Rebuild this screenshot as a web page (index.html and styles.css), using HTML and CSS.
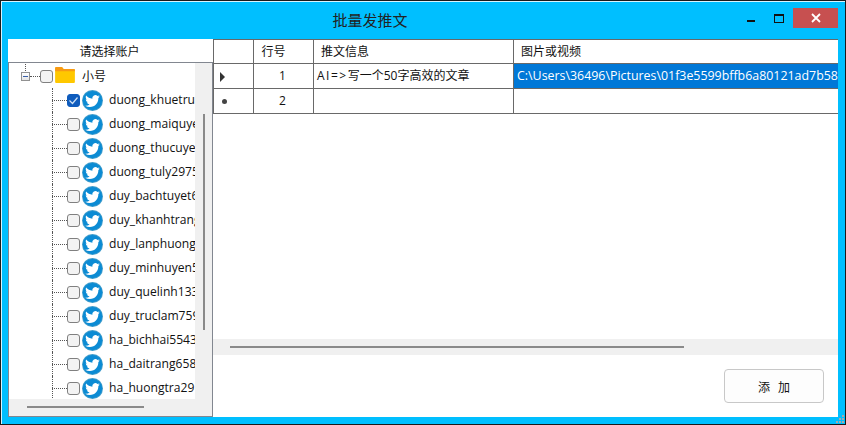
FILE: index.html
```html
<!DOCTYPE html>
<html lang="zh">
<head>
<meta charset="utf-8">
<title>批量发推文</title>
<link rel="stylesheet" href="styles.css">
</head>
<body>
<svg class="defs" width="0" height="0" aria-hidden="true">
  <symbol id="bird" viewBox="0 0 24 24">
    <circle cx="12" cy="12" r="12" fill="#3f9ccb"/>
    <circle cx="12" cy="12" r="11" fill="#0b8bd4"/>
    <g transform="translate(3.6 4.2) scale(.7)">
      <path fill="#fff" d="M23.953 4.57a10 10 0 01-2.825.775 4.958 4.958 0 002.163-2.723c-.951.555-2.005.959-3.127 1.184a4.92 4.92 0 00-8.384 4.482C7.69 8.095 4.067 6.13 1.64 3.162a4.822 4.822 0 00-.666 2.475c0 1.71.87 3.213 2.188 4.096a4.904 4.904 0 01-2.228-.616v.06a4.923 4.923 0 003.946 4.827 4.996 4.996 0 01-2.212.085 4.936 4.936 0 004.604 3.417 9.867 9.867 0 01-6.102 2.105c-.39 0-.779-.023-1.17-.067a13.995 13.995 0 007.557 2.209c9.053 0 13.998-7.496 13.998-13.985 0-.21 0-.42-.015-.63A9.935 9.935 0 0024 4.59z"/>
    </g>
  </symbol>
</svg>
<div class="window">
  <header class="titlebar">
    <div class="title">批量发推文</div>
    <div class="controls">
      <span class="ctl-min"></span>
      <span class="ctl-max"></span>
      <span class="ctl-close">
        <svg width="10" height="10" viewBox="0 0 10 10"><path d="M1 1l8 8M9 1l-8 8" stroke="#fff" stroke-width="1.8"/></svg>
      </span>
    </div>
  </header>
  <main class="content">
    <section class="left">
      <div class="left-head">请选择账户</div>
      <div class="tree">
        <div class="tree-main">
          <div class="tree-rows">
            <div class="row root">
              <span class="stub"></span>
              <span class="expander"></span>
              <span class="hline short"></span>
              <span class="check"></span>
              <svg class="folder" width="20" height="16" viewBox="0 0 21 17">
                <path d="M0 1.5C0 .7.5 0 1.3 0h6L9 2h11c.6 0 1 .4 1 1v13c0 .6-.4 1-1 1H1c-.6 0-1-.4-1-1z" fill="#ffc800"/>
                <path d="M0 1.5C0 .7.5 0 1.3 0h6L9 2h11c.6 0 1 .4 1 1v1.4H0z" fill="#f79a14"/>
              </svg>
              <span class="root-label">小号</span>
            </div>
            <div class="row leaf"><span class="hline"></span><span class="check on"><svg width="11" height="9" viewBox="0 0 11 9"><path d="M1.5 4.5l3 3 5-6" fill="none" stroke="#cfe2f5" stroke-width="1.2"/></svg></span><svg class="bird"><use href="#bird"/></svg><span class="label">duong_khuetrung</span></div>
            <div class="row leaf"><span class="hline"></span><span class="check"></span><svg class="bird"><use href="#bird"/></svg><span class="label">duong_maiquyen</span></div>
            <div class="row leaf"><span class="hline"></span><span class="check"></span><svg class="bird"><use href="#bird"/></svg><span class="label">duong_thucuyen</span></div>
            <div class="row leaf"><span class="hline"></span><span class="check"></span><svg class="bird"><use href="#bird"/></svg><span class="label">duong_tuly2975</span></div>
            <div class="row leaf"><span class="hline"></span><span class="check"></span><svg class="bird"><use href="#bird"/></svg><span class="label">duy_bachtuyet68</span></div>
            <div class="row leaf"><span class="hline"></span><span class="check"></span><svg class="bird"><use href="#bird"/></svg><span class="label">duy_khanhtrang</span></div>
            <div class="row leaf"><span class="hline"></span><span class="check"></span><svg class="bird"><use href="#bird"/></svg><span class="label">duy_lanphuong</span></div>
            <div class="row leaf"><span class="hline"></span><span class="check"></span><svg class="bird"><use href="#bird"/></svg><span class="label">duy_minhuyen5</span></div>
            <div class="row leaf"><span class="hline"></span><span class="check"></span><svg class="bird"><use href="#bird"/></svg><span class="label">duy_quelinh133</span></div>
            <div class="row leaf"><span class="hline"></span><span class="check"></span><svg class="bird"><use href="#bird"/></svg><span class="label">duy_truclam759</span></div>
            <div class="row leaf"><span class="hline"></span><span class="check"></span><svg class="bird"><use href="#bird"/></svg><span class="label">ha_bichhai5543</span></div>
            <div class="row leaf"><span class="hline"></span><span class="check"></span><svg class="bird"><use href="#bird"/></svg><span class="label">ha_daitrang658</span></div>
            <div class="row leaf"><span class="hline"></span><span class="check"></span><svg class="bird"><use href="#bird"/></svg><span class="label">ha_huongtra29</span></div>
          </div>
          <div class="vscroll"><span class="vthumb"></span></div>
        </div>
        <div class="hscroll"><span class="hthumb"></span></div>
      </div>
    </section>
    <section class="right">
      <div class="grid-area">
        <div class="grid">
          <div class="gr head">
            <div class="c c0"></div><div class="c c1 hctr">行号</div><div class="c c2 pad">推文信息</div><div class="c c3 pad">图片或视频</div>
          </div>
          <div class="gr">
            <div class="c c0"><span class="arrow"></span></div><div class="c c1 ctr">1</div><div class="c c2"><span class="ai">AI=&gt;</span>写一个50字高效的文章</div><div class="c c3 sel">C:\Users\36496\Pictures\01f3e5599bffb6a80121ad7b58</div>
          </div>
          <div class="gr">
            <div class="c c0"><span class="star"></span></div><div class="c c1 ctr">2</div><div class="c c2"></div><div class="c c3"></div>
          </div>
        </div>
      </div>
      <div class="grid-scroll"><span class="gthumb"></span></div>
      <div class="actions"><button class="add" type="button">添&nbsp;&nbsp;&nbsp;加</button></div>
    </section>
  </main>
  <svg class="grip" width="9" height="9" viewBox="0 0 9 9" aria-hidden="true">
    <path fill="#a9a9a9" d="M6 0h2v2H6zM3 3h2v2H3zM6 3h2v2H6zM0 6h2v2H0zM3 6h2v2H3zM6 6h2v2H6z"/>
  </svg>
</div>
</body>
</html>
```
FILE: styles.css
```css
* { box-sizing: border-box; }
html, body { margin: 0; padding: 0; }
body {
  width: 846px;
  height: 425px;
  overflow: hidden;
  font-family: "Open Sans", "Noto Sans CJK SC", sans-serif;
  color: #111;
}
.defs { position: absolute; }
.window {
  position: relative;
  width: 846px;
  height: 425px;
  background: #00bfff;
  border: 1px solid #1a1a1a;
  box-shadow: inset 1px 1px 0 #d8f4ff;
  padding: 0 7px 7px 7px;
  display: flex;
  flex-direction: column;
}
.grip { position: absolute; right: 0; bottom: 0; }
.titlebar {
  height: 38px;
  flex: none;
  display: flex;
  align-items: flex-start;
  position: relative;
}
.title {
  flex: 1;
  padding-right: 106px;
  text-align: center;
  font: 15px/38px "Noto Sans CJK SC", sans-serif;
  color: #222;
}
.controls {
  position: absolute;
  right: 0;
  top: 7px;
  display: flex;
  align-items: flex-start;
}
.ctl-min { width: 8px; height: 2px; background: #111; margin: 12px 19px 0 0; }
.ctl-max { width: 10px; height: 9px; border: 1px solid #111; border-top-width: 2px; margin: 6px 9px 0 0; }
.ctl-close {
  width: 45px;
  height: 20px;
  background: #c75050;
  display: flex;
  align-items: center;
  justify-content: center;
}
.content { flex: 1; display: flex; min-height: 0; background: #fff; }
.left { width: 205px; flex: none; display: flex; flex-direction: column; }
.left-head {
  height: 23px;
  flex: none;
  text-align: center;
  padding-right: 2px;
  font: 12px/24px "Noto Sans CJK SC", sans-serif;
}
.tree {
  flex: 1;
  min-height: 0;
  border: 1px solid #828790;
  display: flex;
  flex-direction: column;
  background: #f0f0f0;
}
.tree-main { flex: 1; min-height: 0; display: flex; }
.tree-rows { width: 186px; flex: none; background: #fff; overflow: hidden; padding-top: 1px; position: relative; }
.row { height: 24px; display: flex; align-items: center; white-space: nowrap; }
.root { padding-left: 12px; position: relative; }
.stub { position: absolute; left: 16px; top: 0; height: 7px; border-left: 1px dotted #555; }
.expander {
  width: 9px;
  height: 9px;
  border: 1px solid #919191;
  background: linear-gradient(#fff, #e4e4e4);
  position: relative;
  flex: none;
}
.expander::after { content: ""; position: absolute; left: 1px; right: 1px; top: 3px; height: 1px; background: #3a5fa8; }
.hline { width: 15px; flex: none; border-top: 1px dotted #555; }
.hline.short { width: 10px; }
.check {
  width: 13px;
  height: 13px;
  flex: none;
  border: 1px solid #808080;
  border-radius: 3px;
  background: #f3f3f3;
  display: flex;
  align-items: center;
  justify-content: center;
}
.check.on { background: #0f5cbd; border-color: #0f5cbd; }
.root .check { margin-right: 2px; }
.folder { flex: none; margin-right: 7px; margin-top: -2px; }
.leaf {
  padding-left: 43px;
  position: relative;
}
.leaf::before {
  content: "";
  position: absolute;
  left: 43px;
  top: 0;
  bottom: 0;
  border-left: 1px dotted #555;
}
.bird { width: 21px; height: 21px; flex: none; margin: 0 6px 0 2px; }
.label { font-size: 12.1px; line-height: 24px; }
.root-label { font: 12px/24px "Noto Sans CJK SC", sans-serif; }
.vscroll { flex: 1; background: #f0f0f0; position: relative; display: flex; justify-content: center; padding-top: 51px; height: 336px; }
.vthumb { width: 2px; height: 216px; background: #8a8a8a; display: block; }
.hscroll { height: 17px; flex: none; background: #f0f0f0; padding: 7px 0 0 18px; }
.hthumb { display: block; width: 117px; height: 2px; background: #8a8a8a; }
.right { flex: 1; min-width: 0; display: flex; flex-direction: column; }
.grid-area { height: 300px; flex: none; overflow: hidden; }
.grid { width: 625px; border-top: 1px solid #696969; }
.gr { display: flex; height: 25px; border-bottom: 1px solid #696969; font-size: 12px; }
.head { height: 24px; }
.c { height: 100%; line-height: 24px; flex: none; border-right: 1px solid #696969; white-space: nowrap; overflow: hidden; padding-left: 3px; position: relative; }
.c0 { width: 41px; border-left: 1px solid #696969; }
.c1 { width: 60px; }
.c2 { width: 200px; }
.c3 { width: 324px; border-right: 0; }
.ctr { text-align: center; padding: 0 2px 0 0; }
.hctr { text-align: center; padding: 0 20px 0 0; }
.pad { padding-left: 7px; }
.ai { letter-spacing: 1.5px; }
.sel { background: #0078d7; color: #fff; font-size: 12.4px; }
.arrow {
  position: absolute;
  left: 6px;
  top: 8px;
  border-left: 5px solid #333;
  border-top: 5px solid transparent;
  border-bottom: 5px solid transparent;
}
.star { position: absolute; left: 8px; top: 10px; width: 5px; height: 5px; border-radius: 50%; background: #444; }
.grid-scroll { height: 16px; flex: none; background: #f0f0f0; padding: 7px 0 0 17px; }
.gthumb { display: block; width: 454px; height: 2px; background: #8a8a8a; }
.actions { flex: 1; display: flex; justify-content: flex-end; padding: 14px 14px 0 0; }
.add {
  width: 100px;
  height: 34px;
  background: #fdfdfd;
  border: 1px solid #c8c8c8;
  border-radius: 4px;
  font: 12px "Noto Sans CJK SC", sans-serif;
  color: #111;
}
```
